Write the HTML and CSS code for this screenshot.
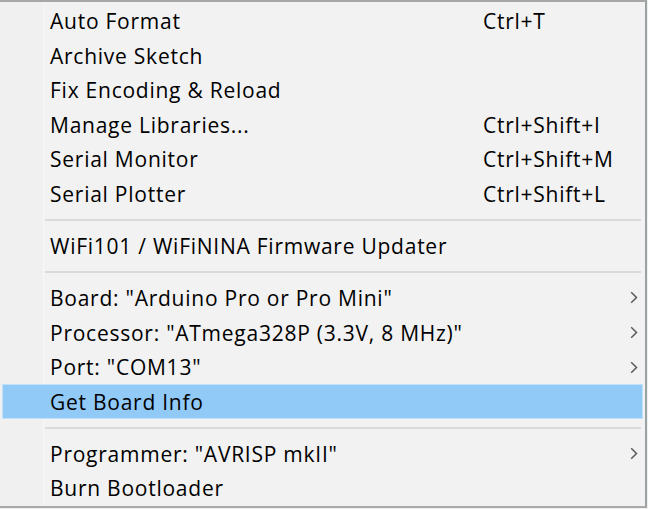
FILE: index.html
```html
<!DOCTYPE html>
<html>
<head>
<meta charset="utf-8">
<link rel="stylesheet" href="styles.css">
</head>
<body>
<div class="menu">
  <div class="gutter"></div>
  <div class="items">
    <div class="row"><span class="label">Auto Format</span><span class="key">Ctrl+T</span></div>
    <div class="row"><span class="label">Archive Sketch</span></div>
    <div class="row"><span class="label">Fix Encoding &amp; Reload</span></div>
    <div class="row"><span class="label">Manage Libraries...</span><span class="key">Ctrl+Shift+I</span></div>
    <div class="row"><span class="label">Serial Monitor</span><span class="key">Ctrl+Shift+M</span></div>
    <div class="row"><span class="label">Serial Plotter</span><span class="key">Ctrl+Shift+L</span></div>
    <div class="sep"></div>
    <div class="row"><span class="label">WiFi101 / WiFiNINA Firmware Updater</span></div>
    <div class="sep"></div>
    <div class="row"><span class="label">Board: "Arduino Pro or Pro Mini"</span><span class="key"></span><svg class="chev" viewBox="0 0 8 13" width="8" height="13"><path d="M1.2 1.2 L6.5 6.5 L1.2 11.8" fill="none" stroke="#5a5a5a" stroke-width="1.5"/></svg></div>
    <div class="row"><span class="label">Processor: "ATmega328P (3.3V, 8 MHz)"</span><span class="key"></span><svg class="chev" viewBox="0 0 8 13" width="8" height="13"><path d="M1.2 1.2 L6.5 6.5 L1.2 11.8" fill="none" stroke="#5a5a5a" stroke-width="1.5"/></svg></div>
    <div class="row"><span class="label">Port: "COM13"</span><span class="key"></span><svg class="chev" viewBox="0 0 8 13" width="8" height="13"><path d="M1.2 1.2 L6.5 6.5 L1.2 11.8" fill="none" stroke="#5a5a5a" stroke-width="1.5"/></svg></div>
    <div class="row active"><span class="label">Get Board Info</span></div>
    <div class="sep"></div>
    <div class="row"><span class="label">Programmer: "AVRISP mkII"</span><span class="key"></span><svg class="chev" viewBox="0 0 8 13" width="8" height="13"><path d="M1.2 1.2 L6.5 6.5 L1.2 11.8" fill="none" stroke="#5a5a5a" stroke-width="1.5"/></svg></div>
    <div class="row"><span class="label">Burn Bootloader</span></div>
  </div>
</div>
</body>
</html>
```
FILE: styles.css
```css
html, body {
  margin: 0;
  padding: 0;
  background: #f0f0f0;
}
body {
  width: 648px;
  height: 509px;
  overflow: hidden;
  font-family: "Open Sans", "Noto Sans", "Noto Sans CJK SC", sans-serif;
  font-size: 21px;
  font-weight: 500;
  letter-spacing: 0.75px;
  color: #000;
}
.menu {
  position: relative;
  width: 645px;
  height: 504px;
  box-sizing: content-box;
  border-top: 2px solid #a7a7a7;
  border-right: 2px solid #9aa3a3;
  border-bottom: 2px solid #a9a9a9;
  background: #f2f2f2;
  display: flex;
}
.gutter {
  width: 43px;
  background: #f0f0f0;
  border-right: 1px solid #f7f7f7;
  flex: none;
}
.items {
  position: absolute;
  left: 0;
  top: 0;
  right: 0;
  padding-top: 1.7px;
}
.row {
  height: 34.6px;
  box-sizing: border-box;
  margin: 0 2px;
  padding-left: 48px;
  display: grid;
  grid-template-columns: 433px 1fr 8px;
  align-items: center;
  border: 1px solid transparent;
  padding-right: 4px;
  white-space: nowrap;
}
.row .label {
  grid-column: 1;
  margin-left: -1px;
}
.row .key {
  grid-column: 2;
  margin-left: -1px;
}
.row .chev {
  grid-column: 3;
  display: block;
}
.row.active {
  background: #91c9f7;
  border-color: #c2e2fc;
}
.sep {
  height: 17.4px;
  display: flex;
  align-items: center;
  padding-left: 45px;
  padding-right: 4px;
}
.sep::before {
  content: "";
  display: block;
  height: 2px;
  flex: 1;
  background: #dadada;
}
```
